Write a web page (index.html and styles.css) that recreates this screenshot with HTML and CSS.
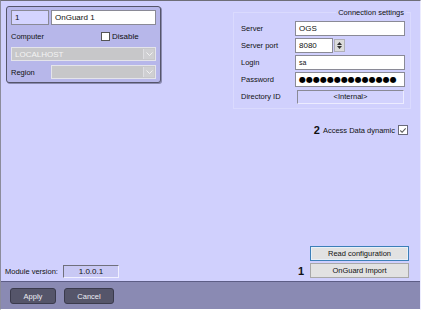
FILE: index.html
```html
<!DOCTYPE html>
<html lang="en">
<head>
  <meta charset="UTF-8" />
  <title>OnGuard settings</title>
  <link rel="stylesheet" href="styles.css">
</head>
<body>

  <div class="window">
    <div class="main">
      <div class="top">

        <div class="obj-box">
          <div class="row">
            <span class="field id-field">1</span>
            <span class="field name-field">OnGuard 1</span>
          </div>
          <div class="row computer-row">
            <span class="computer-label">Computer</span>
            <span class="check"><span class="box"></span>Disable</span>
          </div>
          <div class="combo combo-wide">
            <span class="combo-text">LOCALHOST</span>
            <span class="drop"><svg width="7" height="4" viewBox="0 0 7 4"><polyline points="0.5,0.5 3.5,3.5 6.5,0.5" fill="none" stroke="#f2f2f2" stroke-width="1"/></svg></span>
          </div>
          <div class="row region-row">
            <span class="region-label">Region</span>
            <div class="combo combo-region">
              <span class="combo-text"></span>
              <span class="drop"><svg width="7" height="4" viewBox="0 0 7 4"><polyline points="0.5,0.5 3.5,3.5 6.5,0.5" fill="none" stroke="#f2f2f2" stroke-width="1"/></svg></span>
            </div>
          </div>
        </div>

        <div class="right-col">
          <div class="conn">
            <span class="conn-title">Connection settings</span>
            <div class="conn-grid">
              <span class="conn-label">Server</span>
              <span class="field">OGS</span>

              <span class="conn-label">Server port</span>
              <div class="port">
                <span class="field port-field">8080</span>
                <span class="spin">
                  <svg width="5" height="3" viewBox="0 0 5 3"><polygon points="0,3 2.5,0 5,3" fill="#333"/></svg>
                  <svg width="5" height="3" viewBox="0 0 5 3"><polygon points="0,0 2.5,3 5,0" fill="#333"/></svg>
                </span>
              </div>

              <span class="conn-label">Login</span>
              <span class="field small-text">sa</span>

              <span class="conn-label">Password</span>
              <span class="field password">●●●●●●●●●●●●●●</span>

              <span class="conn-label">Directory ID</span>
              <span class="dir-box">&lt;Internal&gt;</span>
            </div>
          </div>

          <div class="dynamic">
            <b class="marker">2</b>
            <span>Access Data dynamic</span>
            <span class="box checked"><svg width="9" height="9" viewBox="0 0 9 9"><polyline points="1.5,4.5 3.5,6.5 7.5,2" fill="none" stroke="#555" stroke-width="1.2"/></svg></span>
          </div>
        </div>

      </div>

      <div class="bottom">
        <div class="version">
          <span>Module version:</span>
          <span class="ver-box">1.0.0.1</span>
        </div>
        <div class="actions">
          <button class="btn focused">Read configuration</button>
          <div class="import-row">
            <b class="marker">1</b>
            <button class="btn">OnGuard Import</button>
          </div>
        </div>
      </div>
    </div>

    <div class="buttonbar">
      <button class="dark-btn">Apply</button>
      <button class="dark-btn">Cancel</button>
    </div>
  </div>

</body>
</html>
```

FILE: styles.css
```css
body {
  margin: 0;
  font-family: "Liberation Sans", Arial, sans-serif;
  font-size: 7.5px;
  color: #111;
  background: #fff;
}

.window {
  width: 421px;
  height: 310px;
  box-sizing: border-box;
  display: flex;
  flex-direction: column;
  background: #d0d0fd;
  border-top: 1px solid #6e6e78;
  border-left: 1px solid #8c8c9c;
  border-right: 1px solid #ececff;
  border-bottom: 1px solid #fff;
}

.main {
  flex: 1;
  display: flex;
  flex-direction: column;
  justify-content: space-between;
  padding: 5px 9px 3px 3px;
}

.top {
  display: flex;
  justify-content: space-between;
  align-items: flex-start;
}

/* left object box */
.obj-box {
  width: 155px;
  height: 77px;
  box-sizing: border-box;
  margin-left: 2px;
  padding: 3px 4px;
  background: #b7b7ea;
  border: 1px solid #55556a;
  border-radius: 3px;
  box-shadow: 1px 1px 0 #8a8ab0;
}

.row {
  display: flex;
  align-items: center;
  gap: 2px;
}

.field {
  display: flex;
  align-items: center;
  height: 15px;
  box-sizing: border-box;
  padding: 0 3px;
  background: #fff;
  border: 1px solid #8a8a96;
  font-size: 8px;
  white-space: nowrap;
  overflow: hidden;
}

.id-field {
  width: 38px;
  background: #d4d4ff;
}

.name-field {
  width: 105px;
}

.computer-row {
  margin-top: 6px;
  height: 10px;
}

.computer-label {
  width: 88px;
}

.check {
  display: flex;
  align-items: center;
  gap: 2px;
  font-size: 8px;
}

.box {
  display: inline-flex;
  width: 9px;
  height: 9px;
  box-sizing: border-box;
  background: #fff;
  border: 1px solid #555;
}

.box.checked {
  width: 10px;
  height: 10px;
  border-color: #6a6a7a;
  align-items: center;
  justify-content: center;
}

.combo {
  display: flex;
  align-items: center;
  justify-content: space-between;
  height: 14px;
  box-sizing: border-box;
  padding: 1px 1px 1px 3px;
  background: #c7c7c9;
  border: 1px solid #e4e4ea;
  color: #f4f4f4;
  font-size: 8px;
}

.combo-wide {
  margin-top: 6px;
}

.drop {
  display: flex;
  align-items: center;
  justify-content: center;
  width: 10px;
  height: 10px;
  background: #cfcfd2;
  border-left: 1px solid #dedee2;
}

.region-row {
  margin-top: 4px;
}

.region-label {
  width: 38px;
}

.combo-region {
  width: 105px;
}

/* connection settings */
.right-col {
  display: flex;
  flex-direction: column;
  align-items: flex-end;
}

.conn {
  width: 178px;
  box-sizing: border-box;
  margin-top: 6px;
  padding: 0 4px 4px 7px;
  border: 1px solid #dadafe;
}

.conn-title {
  display: block;
  width: fit-content;
  margin: -6px 0 0 auto;
  padding: 0 2px;
  line-height: 11px;
  background: #d0d0fd;
}

.conn-grid {
  display: grid;
  grid-template-columns: 54px 110px;
  grid-auto-rows: 15px;
  row-gap: 2px;
  align-items: center;
  margin-top: 3px;
}

.conn-label {
  font-size: 7.5px;
}

.port {
  display: flex;
  align-items: center;
  gap: 1px;
}

.port-field {
  width: 38px;
}

.spin {
  display: flex;
  flex-direction: column;
  align-items: center;
  justify-content: space-evenly;
  width: 11px;
  height: 13px;
  box-sizing: border-box;
  background: #dcdcdc;
  border: 1px solid #b0b0b8;
}

.small-text {
  font-size: 7px;
}

.password {
  font-family: "DejaVu Sans", sans-serif;
  font-size: 8px;
  color: #000;
}

.dir-box {
  display: flex;
  align-items: center;
  justify-content: center;
  height: 14px;
  margin: 0 1px 0 2px;
  box-sizing: border-box;
  background: #d2d2fd;
  border: 1px solid #8a8a96;
  border-right-color: #ececff;
  border-bottom-color: #ececff;
}

.dynamic {
  display: flex;
  align-items: center;
  gap: 3px;
  margin-top: 15px;
  margin-right: 3px;
}

.marker {
  font-size: 11px;
  font-weight: bold;
}

/* bottom area */
.bottom {
  display: flex;
  justify-content: space-between;
  align-items: flex-end;
}

.version {
  display: flex;
  align-items: center;
  gap: 5px;
  margin-left: 1px;
}

.ver-box {
  display: flex;
  align-items: center;
  justify-content: center;
  width: 56px;
  height: 13px;
  box-sizing: border-box;
  background: #c8c8f4;
  border: 1px solid #70707c;
  border-right-color: #f0f0ff;
  border-bottom-color: #f0f0ff;
  font-size: 8px;
}

.actions {
  display: flex;
  flex-direction: column;
  align-items: flex-end;
  gap: 2px;
  margin-right: 2px;
}

.import-row {
  display: flex;
  align-items: center;
  gap: 6px;
}

.btn {
  width: 99px;
  height: 15px;
  padding: 0;
  font-family: inherit;
  font-size: 7.5px;
  color: #111;
  background: #e2e2e2;
  border: 1px solid #a8a8a8;
}

.btn.focused {
  border-color: #3c7fb8;
  box-shadow: inset 0 0 0 1px #e8f0f8;
}

.buttonbar {
  height: 28px;
  box-sizing: border-box;
  display: flex;
  gap: 8px;
  padding: 6px 0 0 9px;
  background: #8a8ab3;
  border-top: 1px solid #5d5d85;
}

.dark-btn {
  width: 46px;
  height: 16px;
  padding: 0;
  font-family: inherit;
  font-size: 7.5px;
  color: #ececf4;
  background: #55556a;
  border: 1px solid #3a3a4c;
  border-radius: 3px;
}

.dark-btn + .dark-btn {
  width: 50px;
}
```
